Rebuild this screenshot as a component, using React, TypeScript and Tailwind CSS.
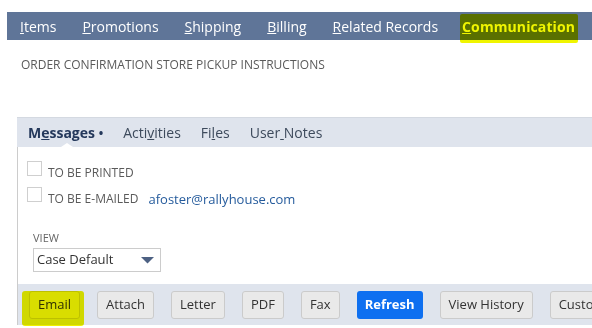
const navItems: [string, string][] = [
  ["I", "tems"],
  ["P", "romotions"],
  ["S", "hipping"],
  ["B", "illing"],
  ["R", "elated Records"],
];

const buttons = ["Email", "Attach", "Letter", "PDF", "Fax", "Refresh", "View History", "Customize View"];

function Checkbox() {
  return <span className="inline-block h-[15px] w-[15px] shrink-0 border border-[#cfcfcf] bg-white" />;
}

export default function App() {
  return (
    <div className="relative h-[328px] w-[592px] overflow-hidden bg-white font-['Open_Sans',sans-serif]">
      {/* top subtabs */}
      <div className="ml-[7px] mt-[12px] flex h-[28px] items-center gap-[26px] whitespace-nowrap bg-[#5f7598] pl-[13px] text-[14px] text-white">
        {navItems.map(([k, rest]) => (
          <span key={k} className="shrink-0">
            <u>{k}</u>
            {rest}
          </span>
        ))}
        <span className="ml-[-2px] shrink-0 font-bold tracking-[0.1px]">
          <u>C</u>ommunication
        </span>
      </div>

      <div className="ml-[21px] mt-[16px] text-[12px] text-[#5a5a5a]">
        ORDER CONFIRMATION STORE PICKUP INSTRUCTIONS
      </div>

      {/* inner tabs */}
      <div className="relative ml-[17px] mt-[43px] flex h-[30px] items-center gap-[20px] whitespace-nowrap border-t border-[#d4d9e1] bg-[#dfe4ed] pl-[11px] text-[14px] text-[#3d4a5c]">
        <span className="font-bold text-[#24385b]">
          M<u>e</u>ssages <span className="text-[12px]">•</span>
        </span>
        <span>
          Acti<u>v</u>ities
        </span>
        <span>
          Fi<u>l</u>es
        </span>
        <span>
          User<u> </u>Notes
        </span>
        <span className="absolute bottom-0 left-[44px] h-0 w-0 border-x-[6px] border-b-[4px] border-x-transparent border-b-white" />
      </div>

      <div className="ml-[17px] border-l border-[#cccccc]">
        <div className="flex flex-col pl-[9px] pt-[14px] text-[12px] text-[#5a5a5a]">
          <div className="flex h-[26px] items-start gap-[6px]">
            <Checkbox />
            <span className="mt-[4px] leading-[16px]">TO BE PRINTED</span>
          </div>
          <div className="flex h-[26px] items-start gap-[6px]">
            <Checkbox />
            <span className="mt-[4px] leading-[16px]">TO BE E-MAILED</span>
            <span className="ml-[4px] mt-[3px] text-[13px] leading-[18px] text-[#255b9c]">afoster@rallyhouse.com</span>
          </div>
        </div>

        <div className="pl-[15px] pt-[18px]">
          <div className="text-[11px] leading-[14px] text-[#666]">VIEW</div>
          <div className="mt-[3px] flex h-[24px] w-[128px] items-center justify-between border border-[#cccccc] pl-[3px] pr-[6px] text-[13px] text-[#333]">
            <span>Case Default</span>
            <svg width="13" height="7" viewBox="0 0 13 7">
              <path d="M0 0 H13 L6.5 6.5 Z" fill="#4d6183" />
            </svg>
          </div>
        </div>

        <div className="mt-[12px] flex h-[41px] items-center gap-[17px] whitespace-nowrap bg-[#dfe4ed] pl-[11px] text-[13px]">
          {buttons.map((b) => (
            <span
              key={b}
              className={
                b === "Refresh"
                  ? "flex h-[28px] shrink-0 items-center rounded-[3px] bg-[#0e6ff0] px-[8px] font-bold text-white"
                  : "flex h-[28px] shrink-0 items-center rounded-[3px] border border-[#cbcbcb] bg-[#e9e9e9] px-[8px] text-[#333]"
              }
            >
              {b}
            </span>
          ))}
        </div>
      </div>

      {/* highlighter marks */}
      <div className="pointer-events-none absolute left-[460px] top-[14px] h-[29px] w-[118px] rounded-[2px] bg-[#f0f500] mix-blend-multiply" />
      <div className="pointer-events-none absolute left-[22px] top-[291px] h-[35px] w-[62px] rounded-[3px] bg-[#eef200] mix-blend-multiply" />
    </div>
  );
}
